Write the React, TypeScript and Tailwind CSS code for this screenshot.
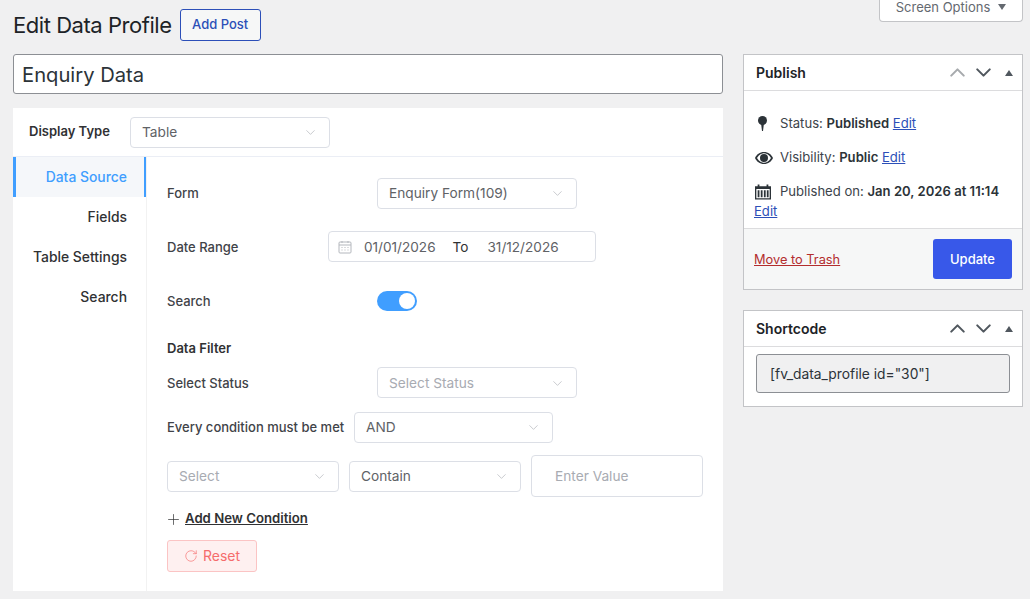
import { ChevronDown, ChevronUp, Plus, RotateCw } from "lucide-react";

const Select = ({ value, className, muted }: { value: string; className: string; muted?: boolean }) => (
  <div
    className={`flex h-[31px] items-center justify-between rounded border border-[#dcdfe6] bg-white pl-[11px] pr-[11px] text-[13.7px] font-normal ${
      muted ? "text-[#a8abb2]" : "text-[#606266]"
    } ${className}`}
  >
    <span>{value}</span>
    <ChevronDown size={15} strokeWidth={1} className="text-[#a8abb2]" />
  </div>
);

const BoxHeader = ({ title, upMuted }: { title: string; upMuted?: boolean }) => (
  <div className="flex h-[36px] items-center justify-between border-b border-[#dcdcde] pl-[12px] pr-[9px]">
    <span className="text-[14px] font-semibold text-[#1d2327]">{title}</span>
    <div className="flex items-center text-[#50575e]">
      <ChevronUp size={25} strokeWidth={2} className={upMuted ? "text-[#a7aaad]" : ""} />
      <ChevronDown size={25} strokeWidth={2} className="ml-[1px]" />
      <svg width="8" height="6" viewBox="0 0 8 6" className="ml-[9px] fill-[#50575e]">
        <path d="M4 0l4 6H0z" />
      </svg>
    </div>
  </div>
);

const tabs = ["Data Source", "Fields", "Table Settings", "Search"];

export default function App() {
  return (
    <div className="flex h-[599px] w-[1030px] gap-[20px] overflow-hidden bg-[#f0f0f1] pl-[13px] pr-[7px] font-['Inter',sans-serif] text-[14px] text-[#3c434a]">
      {/* Main column */}
      <div className="w-[710px]">
        <div className="flex h-[54px] items-start pt-[9px]">
          <h1 className="mt-[3px] text-[22px] leading-[26px] tracking-[-0.45px] text-[#1d2327]">Edit Data Profile</h1>
          <button className="ml-[8px] h-[32px] w-[81px] rounded-[3px] border border-[#2c4fb8] bg-[#f6f7f7] text-[13px] font-medium text-[#2c4fb8]">
            Add Post
          </button>
        </div>
        <div className="flex h-[40px] items-center rounded-[3px] border border-[#8c8f94] bg-white pl-[8px] pt-[2px] text-[20.2px] text-[#2c3338]">
          Enquiry Data
        </div>

        <div className="mt-[14px] h-[483px] bg-white">
          <div className="flex h-[49px] items-center border-b border-[#ebeef5] pl-[16px]">
            <span className="w-[101px] text-[13px] font-semibold text-[#303133]">Display Type</span>
            <Select value="Table" className="w-[200px]" />
          </div>

          <div className="flex h-[434px]">
            <div className="h-[161px] w-[134px] shrink-0 border-r border-[#dcdfe6]">
              {tabs.map((t, i) => (
                <div
                  key={t}
                  className={`flex h-[40px] items-center justify-end text-[13.9px] font-medium ${
                    i === 0
                      ? "-mr-px border-x-[3px] border-[#409eff] bg-[#f5f7fa] pr-[17px] text-[#409eff]"
                      : "pr-[19px] text-[#303133]"
                  }`}
                >
                  {t}
                </div>
              ))}
            </div>

            <div className="-ml-px w-[577px] border-l border-[#f2f2f2] pl-[20px] text-[13px] font-medium text-[#3f4348]">
              <div className="mt-[21px] flex items-center">
                <span className="w-[210px]">Form</span>
                <Select value="Enquiry Form(109)" className="w-[200px]" />
              </div>
              <div className="mt-[22px] flex items-center">
                <span className="w-[161px] pt-[2px]">Date Range</span>
                <div className="flex h-[31px] w-[268px] items-center rounded border border-[#dcdfe6] pl-[9px] text-[13.6px] font-normal text-[#606266]">
                  <svg width="14" height="14" viewBox="0 0 14 14" fill="none" stroke="#b4b7bd" strokeWidth="1">
                    <rect x="1" y="2" width="12" height="11" rx="1" />
                    <path d="M1 5h12M4 1v2M10 1v2M3.500 7.500h1M6.500 7.500h1M9.500 7.500h1M3.500 10h1M6.500 10h1M9.500 10h1" />
                  </svg>
                  <span className="ml-[12px] pt-[1px]">01/01/2026</span>
                  <span className="ml-[17px] pt-[1px] text-[#303133]">To</span>
                  <span className="ml-[19px] pt-[1px]">31/12/2026</span>
                </div>
              </div>
              <div className="mt-[29px] flex h-[20px] items-center">
                <span className="w-[210px] leading-[21px]">Search</span>
                <div className="flex h-[20px] w-[40px] items-center justify-end rounded-full bg-[#409eff] pr-[2px]">
                  <span className="h-[16px] w-[16px] rounded-full bg-white" />
                </div>
              </div>
              <div className="mt-[28px] h-[18px] font-semibold leading-[18px] text-[#303133]">Data Filter</div>
              <div className="mt-[10px] flex items-center">
                <span className="w-[210px] pt-[2px]">Select Status</span>
                <Select value="Select Status" className="w-[200px] pt-[1px]" muted />
              </div>
              <div className="mt-[14px] flex items-center">
                <span className="w-[187px]">Every condition must be met</span>
                <Select value="AND" className="w-[199px]" />
              </div>
              <div className="mt-[12px] flex items-center gap-[10px]">
                <Select value="Select" className="w-[172px]" muted />
                <Select value="Contain" className="w-[172px]" />
                <div className="flex h-[42px] w-[172px] items-center rounded border border-[#dcdfe6] pl-[23px] text-[13.7px] font-normal text-[#a8abb2]">
                  Enter Value
                </div>
              </div>
              <div className="mt-[13px] flex h-[18px] items-center">
                <Plus size={17} strokeWidth={1} className="-ml-[2px] text-[#303133]" />
                <span className="ml-[3px] text-[13.2px] font-semibold text-[#303133] underline">Add New Condition</span>
              </div>
              <button className="mt-[12px] flex h-[32px] w-[90px] items-center justify-center gap-[5px] rounded-[3px] border border-[#fbc4c4] bg-[#fef0f0] pb-px text-[14px] font-normal text-[#f56c6c]">
                <RotateCw size={14} strokeWidth={1.1} />
                Reset
              </button>
            </div>
          </div>
        </div>
      </div>

      {/* Side column */}
      <div className="w-[280px]">
        <div className="flex h-[54px] justify-end">
          <div className="flex h-[22px] w-[144px] items-center justify-center gap-[8px] rounded-b border border-t-0 border-[#c3c4c7] bg-white pb-[7px] text-[13px] leading-[14px] text-[#646970]">
            Screen Options
            <svg width="8" height="6" viewBox="0 0 8 6" className="fill-[#646970]">
              <path d="M4 6L0 0h8z" />
            </svg>
          </div>
        </div>

        <div className="border border-[#c3c4c7] bg-white">
          <BoxHeader title="Publish" upMuted />
          <div className="h-[137px] pl-[10px] pt-[24px] text-[13.1px] text-[#3c434a]">
            <div className="flex h-[18px] items-center">
              <svg width="20" height="20" viewBox="0 0 20 20" className="fill-[#2c3338]">
                <circle cx="8.500" cy="6.500" r="4.500" />
                <path d="M7 9h3l-1 8h-1z" />
              </svg>
              <span className="ml-[6px]">
                Status: <b className="font-semibold text-[#2c3338]">Published</b>{" "}
                <span className="text-[#2c4fb8] underline">Edit</span>
              </span>
            </div>
            <div className="mt-[16px] flex h-[18px] items-center">
              <svg width="20" height="14" viewBox="0 0 20 14" className="fill-[#2c3338]">
                <path
                  fillRule="evenodd"
                  d="M10 1c4.200 0 7.600 2.600 9 6-1.400 3.400-4.800 6-9 6s-7.600-2.600-9-6c1.400-3.400 4.800-6 9-6zM10 2.200C7.800 2.200 5 3.400 3 7c2 3.600 4.800 4.800 7 4.800s5-1.200 7-4.800c-2-3.600-4.800-4.800-7-4.800zM10 3a4 4 0 1 1 0 8 4 4 0 0 1 0-8z"
                />
              </svg>
              <span className="ml-[6px]">
                Visibility: <b className="font-semibold text-[#2c3338]">Public</b>{" "}
                <span className="text-[#2c4fb8] underline">Edit</span>
              </span>
            </div>
            <div className="mt-[16px] flex h-[18px] items-center">
              <svg width="16" height="16" viewBox="0 0 18 17" className="ml-[1px] fill-[#2c3338]">
                <path
                  fillRule="evenodd"
                  d="M3 0h2v2h8V0h2v2h3v15H0V2h3zM1.500 5v10.500h15V5zM3 6.500h2v8H3zM6.500 6.500h2v8h-2zM10 6.500h2v8h-2zM13.300 6.500h2v8h-2z"
                />
              </svg>
              <span className="ml-[9px] whitespace-nowrap">
                Published on: <b className="font-semibold text-[#2c3338]">Jan 20, 2026 at 11:14</b>
              </span>
            </div>
            <div className="mt-px text-[#2c4fb8] underline">Edit</div>
          </div>
          <div className="flex h-[61px] items-center justify-between border-t border-[#dcdcde] bg-[#f6f7f7] pl-[10px] pr-[10px]">
            <span className="pt-px text-[12.8px] text-[#b32d2e] underline">Move to Trash</span>
            <button className="h-[40px] w-[79px] rounded-[3px] bg-[#3858e9] pt-px text-[13px] font-medium text-white">Update</button>
          </div>
        </div>

        <div className="mt-[20px] border border-[#c3c4c7] bg-white">
          <BoxHeader title="Shortcode" />
          <div className="h-[59px] pl-[12px] pt-[7px]">
            <div className="flex h-[39px] w-[254px] items-center rounded-[3px] border border-[#8c8f94] bg-[#f0f0f1] pl-[13px] pt-[2px] text-[13.8px] text-[#2c3338]">
              [fv_data_profile id="30"]
            </div>
          </div>
        </div>
      </div>
    </div>
  );
}
